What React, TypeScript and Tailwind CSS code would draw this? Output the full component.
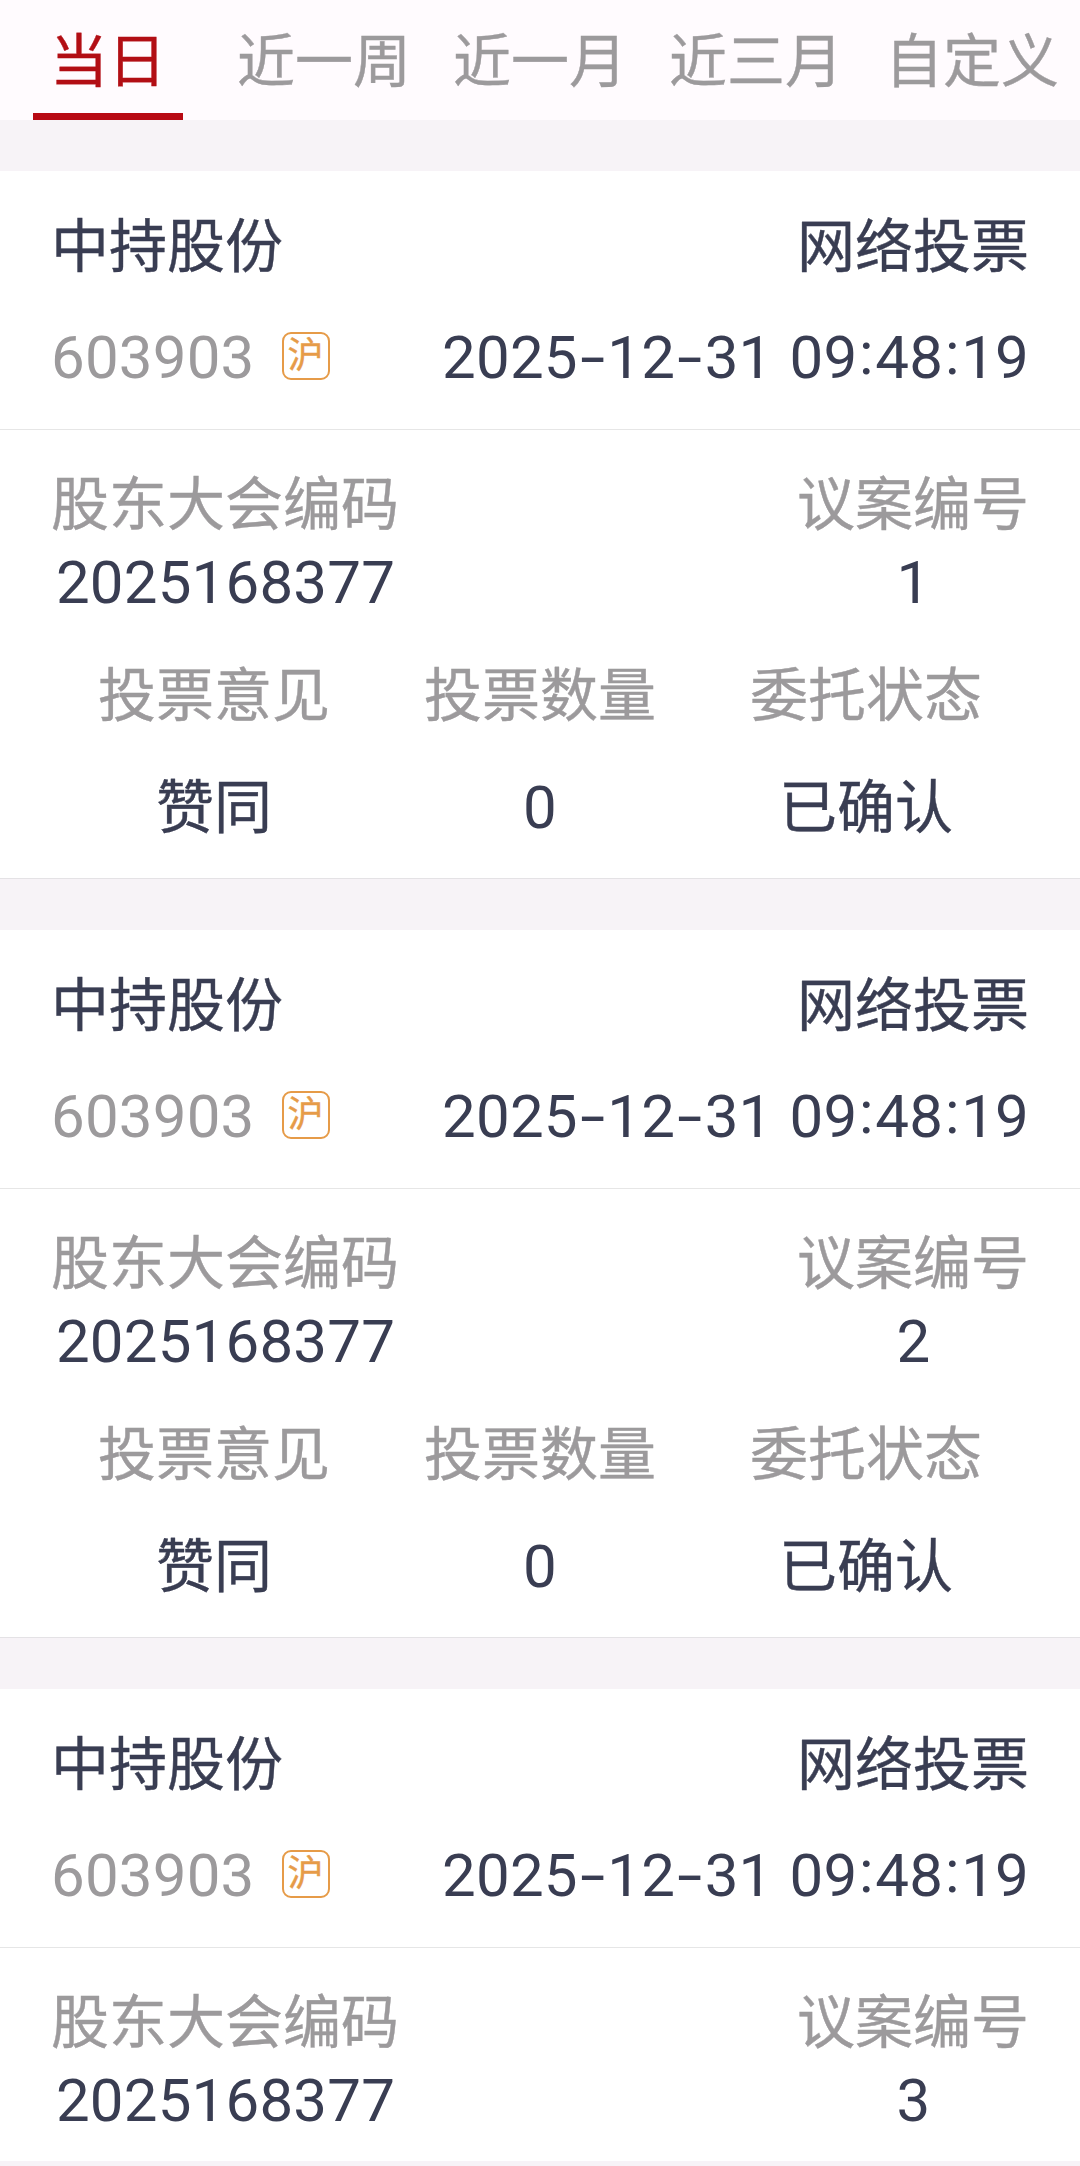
import clsx from 'clsx';

interface VoteRecord {
  name: string;
  code: string;
  market: string;
  method: string;
  time: string;
  meetingCode: string;
  proposalNo: string;
  result?: { opinion: string; amount: string; status: string };
}

const TABS = ['当日', '近一周', '近一月', '近三月', '自定义'];

const base = {
  name: '中持股份',
  code: '603903',
  market: '沪',
  method: '网络投票',
  time: '2025-12-31 09:48:19',
  meetingCode: '2025168377',
};

const result = { opinion: '赞同', amount: '0', status: '已确认' };

const RECORDS: VoteRecord[] = [
  { ...base, proposalNo: '1', result },
  { ...base, proposalNo: '2', result },
  { ...base, proposalNo: '3' },
];

// Numbers are set slightly larger than the Chinese text, with wider separators
function Digits({ value }: { value: string }) {
  return (
    <span className="flex whitespace-pre text-[60px] tracking-[0.2px] [-webkit-text-stroke:0]">
      {value.split(/([-: ])/).map((part, i) => {
        if (part === '-') {
          return (
            <span key={i} className="w-[29.5px] scale-x-150 text-center tracking-normal">
              -
            </span>
          );
        }
        if (part === ':') {
          return (
            <span key={i} className="w-[18px] -translate-y-1 text-center tracking-normal">
              :
            </span>
          );
        }
        if (part === ' ') {
          return (
            <span key={i} className="w-[17px]">
              {' '}
            </span>
          );
        }
        return <span key={i}>{part}</span>;
      })}
    </span>
  );
}

function Tabs({ active }: { active: number }) {
  return (
    <nav className="grid h-[120px] shrink-0 grid-cols-5 bg-[#fffbfe]">
      {TABS.map((tab, i) => (
        <button
          key={tab}
          className={clsx(
            'flex flex-col items-center whitespace-nowrap leading-[124px]',
            i === active ? 'text-[#b20e14]' : 'text-[#9c9a9c]'
          )}
        >
          <span className="h-[113px]">{tab}</span>
          {i === active && <span className="h-[7px] w-[150px] bg-[#b80a14]" />}
        </button>
      ))}
    </nav>
  );
}

function Field({ label, value }: { label: string; value: string }) {
  return (
    <div className="flex flex-col items-center leading-[78px]">
      <span className="text-[#9c9a9c]">{label}</span>
      <span className="pl-px">
        <Digits value={value} />
      </span>
    </div>
  );
}

function RecordCard({ record }: { record: VoteRecord }) {
  return (
    <section className="mb-[51px] min-h-[708px] shrink-0 border-b border-[#e4e2e5] bg-white">
      <div className="border-b border-[#e6e6e6] px-[51px] pt-[19px] pb-[15px] leading-[112px]">
        <div className="flex h-[112px] justify-between leading-[114px]">
          <span>{record.name}</span>
          <span>{record.method}</span>
        </div>
        <div className="flex h-[112px] items-center justify-between">
          <div className="flex items-center gap-[27px] text-[#9c9a9c]">
            <Digits value={record.code} />
            <span className="mb-1 flex h-[48px] w-[48px] items-center justify-center rounded-[9px] border-2 border-[#e69b48] text-[36px] leading-none text-[#e69b48]">
              {record.market}
            </span>
          </div>
          <Digits value={record.time} />
        </div>
      </div>

      <div className="px-[51px] pt-9 pb-3.5">
        <div className="flex justify-between">
          <Field label="股东大会编码" value={record.meetingCode} />
          <Field label="议案编号" value={record.proposalNo} />
        </div>
        {record.result && (
          <div className="mt-[18px] grid grid-cols-3 justify-items-center leading-[112px]">
            <span className="text-[#9c9a9c]">投票意见</span>
            <span className="text-[#9c9a9c]">投票数量</span>
            <span className="text-[#9c9a9c]">委托状态</span>
            <span>{record.result.opinion}</span>
            <Digits value={record.result.amount} />
            <span>{record.result.status}</span>
          </div>
        )}
      </div>
    </section>
  );
}

export default function App() {
  return (
    <div className="flex h-[2166px] w-[1080px] flex-col overflow-hidden bg-[#f7f3f7] font-[Roboto,'Noto_Sans_CJK_SC',sans-serif] text-[58px] text-[#393d52] [-webkit-text-stroke:0.4px]">
      <Tabs active={0} />
      <main className="mt-[51px] mb-[5px] flex min-h-0 flex-1 flex-col overflow-hidden">
        {RECORDS.map((record) => (
          <RecordCard key={record.proposalNo} record={record} />
        ))}
      </main>
    </div>
  );
}
